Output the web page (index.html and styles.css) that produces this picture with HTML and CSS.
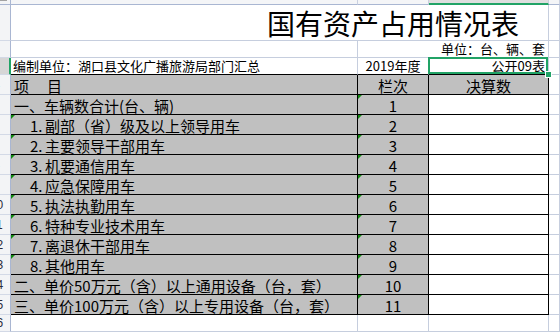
FILE: index.html
```html
<!DOCTYPE html>
<html lang="zh-CN">
<head>
<meta charset="utf-8">
<title>国有资产占用情况表</title>
<link rel="stylesheet" href="styles.css">
</head>
<body>
<div class="sheet">
  <div class="row r-colhdr">
    <div class="rh corner"></div>
    <div class="ch ca"></div>
    <div class="ch cb"></div>
    <div class="ch cc on"></div>
    <div class="ch cd"></div>
  </div>

  <div class="row r-title">
    <div class="rh"><span>1</span></div>
    <div class="title">国有资产占用情况表</div>
    <div class="c cd"></div>
  </div>

  <div class="row r-unit">
    <div class="rh"><span>2</span></div>
    <div class="c ca"></div>
    <div class="c cbc unit">单位：台、辆、套</div>
    <div class="c cd"></div>
  </div>

  <div class="row r-org">
    <div class="rh act"><span>3</span></div>
    <div class="c ca org">编制单位：湖口县文化广播旅游局部门汇总</div>
    <div class="c cb year">2019年度</div>
    <div class="c cc code">公开09表<i class="selbox"></i><i class="handle"></i></div>
    <div class="c cd"></div>
  </div>

  <div class="row r-t head">
    <div class="rh"><span>4</span></div>
    <div class="c ca t g">项<span class="gap"></span>目</div>
    <div class="c cb t g mid">栏次</div>
    <div class="c cc t g mid">决算数</div>
    <div class="c cd"></div>
  </div>

  <div class="row r-t">
    <div class="rh"><span>5</span></div>
    <div class="c ca t g">一、车辆数合计(台、辆)</div>
    <div class="c cb t g mid tri">1</div>
    <div class="c cc t"></div>
    <div class="c cd"></div>
  </div>
  <div class="row r-t">
    <div class="rh"><span>6</span></div>
    <div class="c ca t g sub tri"><span class="no">1.</span>副部（省）级及以上领导用车</div>
    <div class="c cb t g mid tri">2</div>
    <div class="c cc t"></div>
    <div class="c cd"></div>
  </div>
  <div class="row r-t">
    <div class="rh"><span>7</span></div>
    <div class="c ca t g sub tri"><span class="no">2.</span>主要领导干部用车</div>
    <div class="c cb t g mid tri">3</div>
    <div class="c cc t"></div>
    <div class="c cd"></div>
  </div>
  <div class="row r-t">
    <div class="rh"><span>8</span></div>
    <div class="c ca t g sub tri"><span class="no">3.</span>机要通信用车</div>
    <div class="c cb t g mid tri">4</div>
    <div class="c cc t"></div>
    <div class="c cd"></div>
  </div>
  <div class="row r-t">
    <div class="rh"><span>9</span></div>
    <div class="c ca t g sub tri"><span class="no">4.</span>应急保障用车</div>
    <div class="c cb t g mid tri">5</div>
    <div class="c cc t"></div>
    <div class="c cd"></div>
  </div>
  <div class="row r-t">
    <div class="rh"><span>10</span></div>
    <div class="c ca t g sub tri"><span class="no">5.</span>执法执勤用车</div>
    <div class="c cb t g mid tri">6</div>
    <div class="c cc t"></div>
    <div class="c cd"></div>
  </div>
  <div class="row r-t">
    <div class="rh"><span>11</span></div>
    <div class="c ca t g sub tri"><span class="no">6.</span>特种专业技术用车</div>
    <div class="c cb t g mid tri">7</div>
    <div class="c cc t"></div>
    <div class="c cd"></div>
  </div>
  <div class="row r-t">
    <div class="rh"><span>12</span></div>
    <div class="c ca t g sub tri"><span class="no">7.</span>离退休干部用车</div>
    <div class="c cb t g mid tri">8</div>
    <div class="c cc t"></div>
    <div class="c cd"></div>
  </div>
  <div class="row r-t">
    <div class="rh"><span>13</span></div>
    <div class="c ca t g sub tri"><span class="no">8.</span>其他用车</div>
    <div class="c cb t g mid tri">9</div>
    <div class="c cc t"></div>
    <div class="c cd"></div>
  </div>
  <div class="row r-t">
    <div class="rh"><span>14</span></div>
    <div class="c ca t g">二、单价50万元（含）以上通用设备（台，套）</div>
    <div class="c cb t g mid tri">10</div>
    <div class="c cc t"></div>
    <div class="c cd"></div>
  </div>
  <div class="row r-t">
    <div class="rh"><span>15</span></div>
    <div class="c ca t g">三、单价100万元（含）以上专用设备（台，套）</div>
    <div class="c cb t g mid tri">11</div>
    <div class="c cc t"></div>
    <div class="c cd"></div>
  </div>

  <div class="row r-empty">
    <div class="rh"><span>16</span></div>
    <div class="c ca"></div>
    <div class="c cb"></div>
    <div class="c cc"></div>
    <div class="c cd"></div>
  </div>
</div>
</body>
</html>
```

FILE: styles.css
```css
* { box-sizing: border-box; margin: 0; padding: 0; }
html, body { width: 560px; height: 334px; overflow: hidden; background: #fff; }
body { font-family: "Noto Sans CJK SC", "Noto Sans", sans-serif; color: #000; }

.sheet { display: flex; flex-direction: column; width: 560px; }
.row { display: flex; flex: none; }

/* row headers */
.rh {
  width: 11px; flex: none; overflow: hidden;
  display: flex; justify-content: flex-end; align-items: center;
  background: #f3f4f6;
  border-right: 1px solid #a9b6d2;
  border-bottom: 1px solid #d3d9e6;
  font: 12px "Liberation Sans", sans-serif; color: #2b2b3a;
}
.rh span { flex: none; width: 27px; text-align: center; }
.rh.act { background: #d6d6d6; border-right: 2px solid #21a366; }
.corner { background: #f3f4f6; border-bottom: 1px solid #a9b6d2; position: relative; }
.corner::before { content: ""; position: absolute; left: 0; top: 0; width: 7px; height: 1px; background: #a3a3a3; }

/* column widths */
.ca { width: 347px; flex: none; }
.cb { width: 71px; flex: none; }
.cc { width: 120px; flex: none; }
.cbc { width: 191px; flex: none; }
.cd { flex: 1; }

/* column header strip */
.r-colhdr { height: 5px; }
.ch { background: #f4f5f7; border-bottom: 1px solid #a9b6d2; border-right: 1px solid #c9d0e0; }
.ch.on { background: #dedede; border-bottom: 2px solid #21a366; }

/* ordinary cells */
.c {
  border-right: 1px solid #c6cede;
  border-bottom: 1px solid #c6cede;
  white-space: nowrap; overflow: visible;
}

.r-title { height: 36px; }
.title {
  width: 538px; flex: none;
  border-right: 1px solid #c6cede; border-bottom: 1px solid #c6cede;
  font-size: 28px; line-height: 35px; padding-left: 256px; padding-top: 1px;
  white-space: nowrap;
}

.r-unit { height: 17px; }
.r-org { height: 17px; }
.unit, .org, .year, .code { font-size: 13px; line-height: 16px; }
.unit { text-align: right; padding-right: 3px; }
.org { padding-left: 2px; }
.year { text-align: center; }
.code { text-align: right; padding-right: 3px; position: relative; }

.r-org .ca, .r-org .cb, .r-org .cc { border-bottom-color: #000; }

.selbox {
  position: absolute; left: -1px; top: -1px; right: 0; bottom: 0;
  border: 2px solid #21a366;
}
.handle {
  position: absolute; right: -3px; bottom: -3px; width: 5px; height: 5px;
  background: #21a366; outline: 1px solid #fff;
}

/* table */
.r-t { height: 20px; }
.t {
  border-right-color: #000; border-bottom-color: #000;
  font-size: 15px; line-height: 19px; padding-top: 1px;
}
.t.g { background: #c0c0c0; }
.ca.t { padding-left: 3px; }
.ca.t.sub { padding-left: 19px; }
.no { display: inline-block; width: 15px; }
.mid { text-align: center; }
.gap { display: inline-block; width: 18px; }

.tri { position: relative; }
.tri::before {
  content: ""; position: absolute; left: 0; top: 0;
  border-top: 4px solid #128a12; border-right: 4px solid transparent;
}

.r-empty { height: 17px; }
```
